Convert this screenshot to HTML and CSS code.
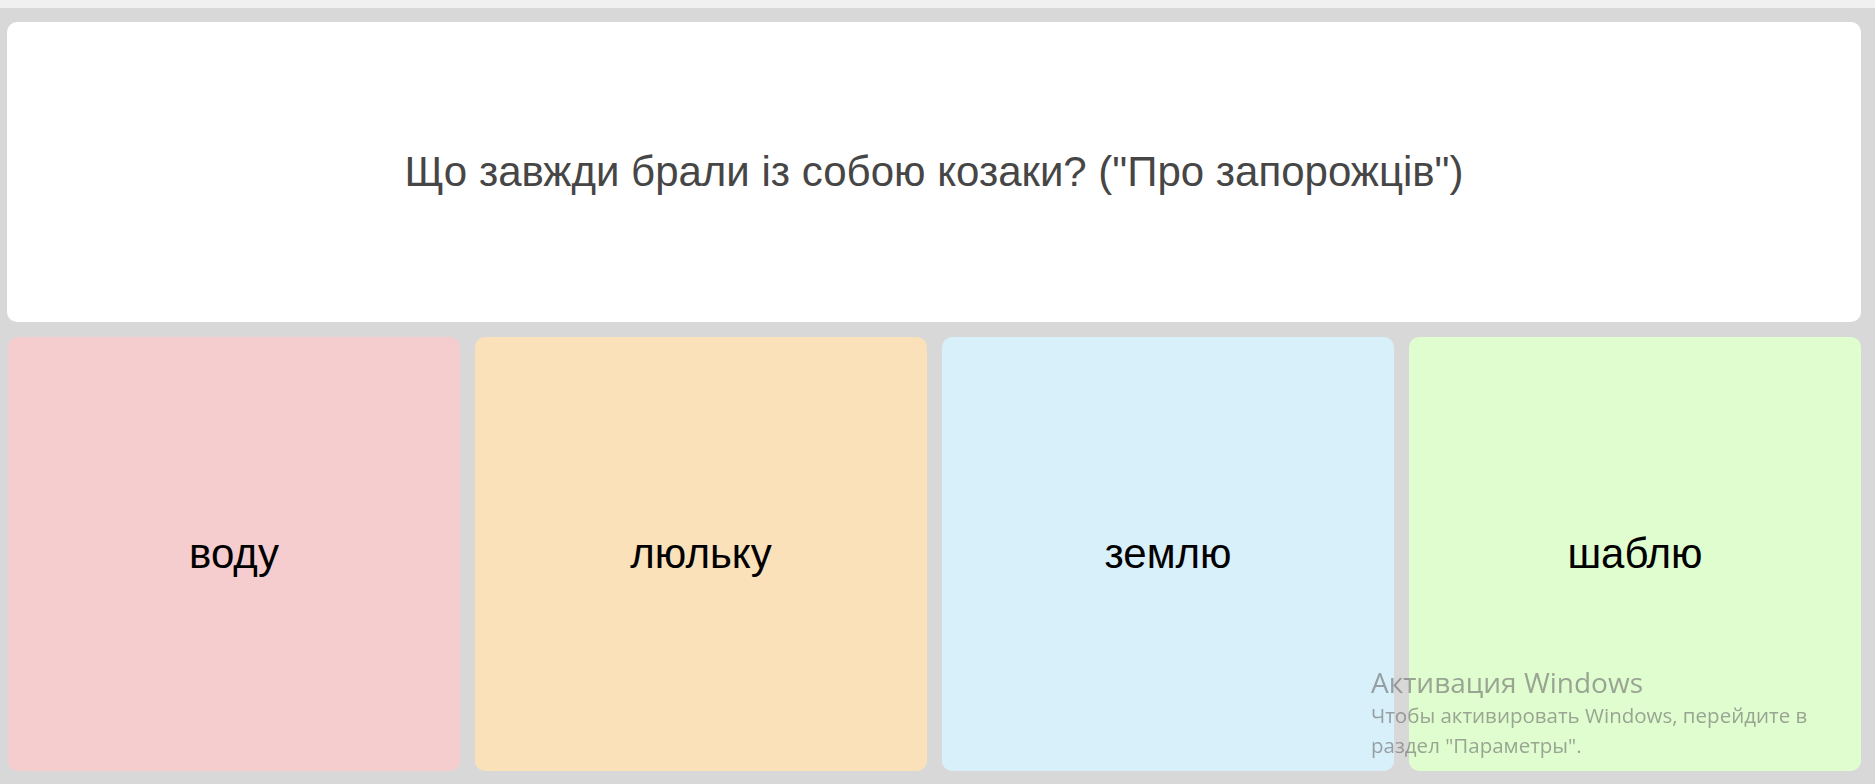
FILE: index.html
```html
<!DOCTYPE html>
<html lang="uk">
<head>
<meta charset="utf-8">
<title>Quiz</title>
<link rel="stylesheet" href="styles.css">
</head>
<body>
<div class="topstrip"></div>
<main class="stage">
  <section class="question">
    <p class="question-text">Що завжди брали із собою козаки? ("Про запорожців")</p>
  </section>
  <section class="answers">
    <div class="answer answer-red">воду</div>
    <div class="answer answer-orange">люльку</div>
    <div class="answer answer-blue">землю</div>
    <div class="answer answer-green">шаблю</div>
  </section>
</main>
<div class="watermark">
  <div class="wm-title">Активация Windows</div>
  <div class="wm-body">Чтобы активировать Windows, перейдите в<br>раздел "Параметры".</div>
</div>
</body>
</html>
```
FILE: styles.css
```css
html, body {
  margin: 0;
  padding: 0;
  height: 100%;
}
body {
  background: #d8d8d8;
  font-family: "Liberation Sans", Arial, sans-serif;
  display: flex;
  flex-direction: column;
  overflow: hidden;
}
.topstrip {
  height: 8px;
  background: #f0f0f0;
  flex: none;
}
.stage {
  flex: 1;
  display: flex;
  flex-direction: column;
  gap: 15px;
  padding: 14px 14px 13px 7px;
  min-height: 0;
}
.question {
  height: 300px;
  flex: none;
  background: #ffffff;
  border-radius: 10px;
  display: flex;
  align-items: center;
  justify-content: center;
}
.question-text {
  margin: 0;
  font-size: 42px;
  color: #464646;
}
.answers {
  flex: 1;
  display: grid;
  grid-template-columns: repeat(4, 1fr);
  gap: 15px;
  padding-left: 1px;
}
.answer {
  border-radius: 10px;
  display: flex;
  align-items: center;
  justify-content: center;
  font-size: 42px;
  color: #000;
}
.answer-red { background: #f6cdce; }
.answer-orange { background: #fae1ba; }
.answer-blue { background: #d8f0fa; }
.answer-green { background: #e0fdcf; }
.watermark {
  position: fixed;
  left: 1371px;
  top: 664px;
  font-family: "Open Sans", "Noto Sans", sans-serif;
  color: rgba(110, 110, 110, 0.62);
  pointer-events: none;
}
.wm-title {
  font-size: 28px;
  line-height: 36px;
}
.wm-body {
  font-size: 20.5px;
  line-height: 30px;
}
```
